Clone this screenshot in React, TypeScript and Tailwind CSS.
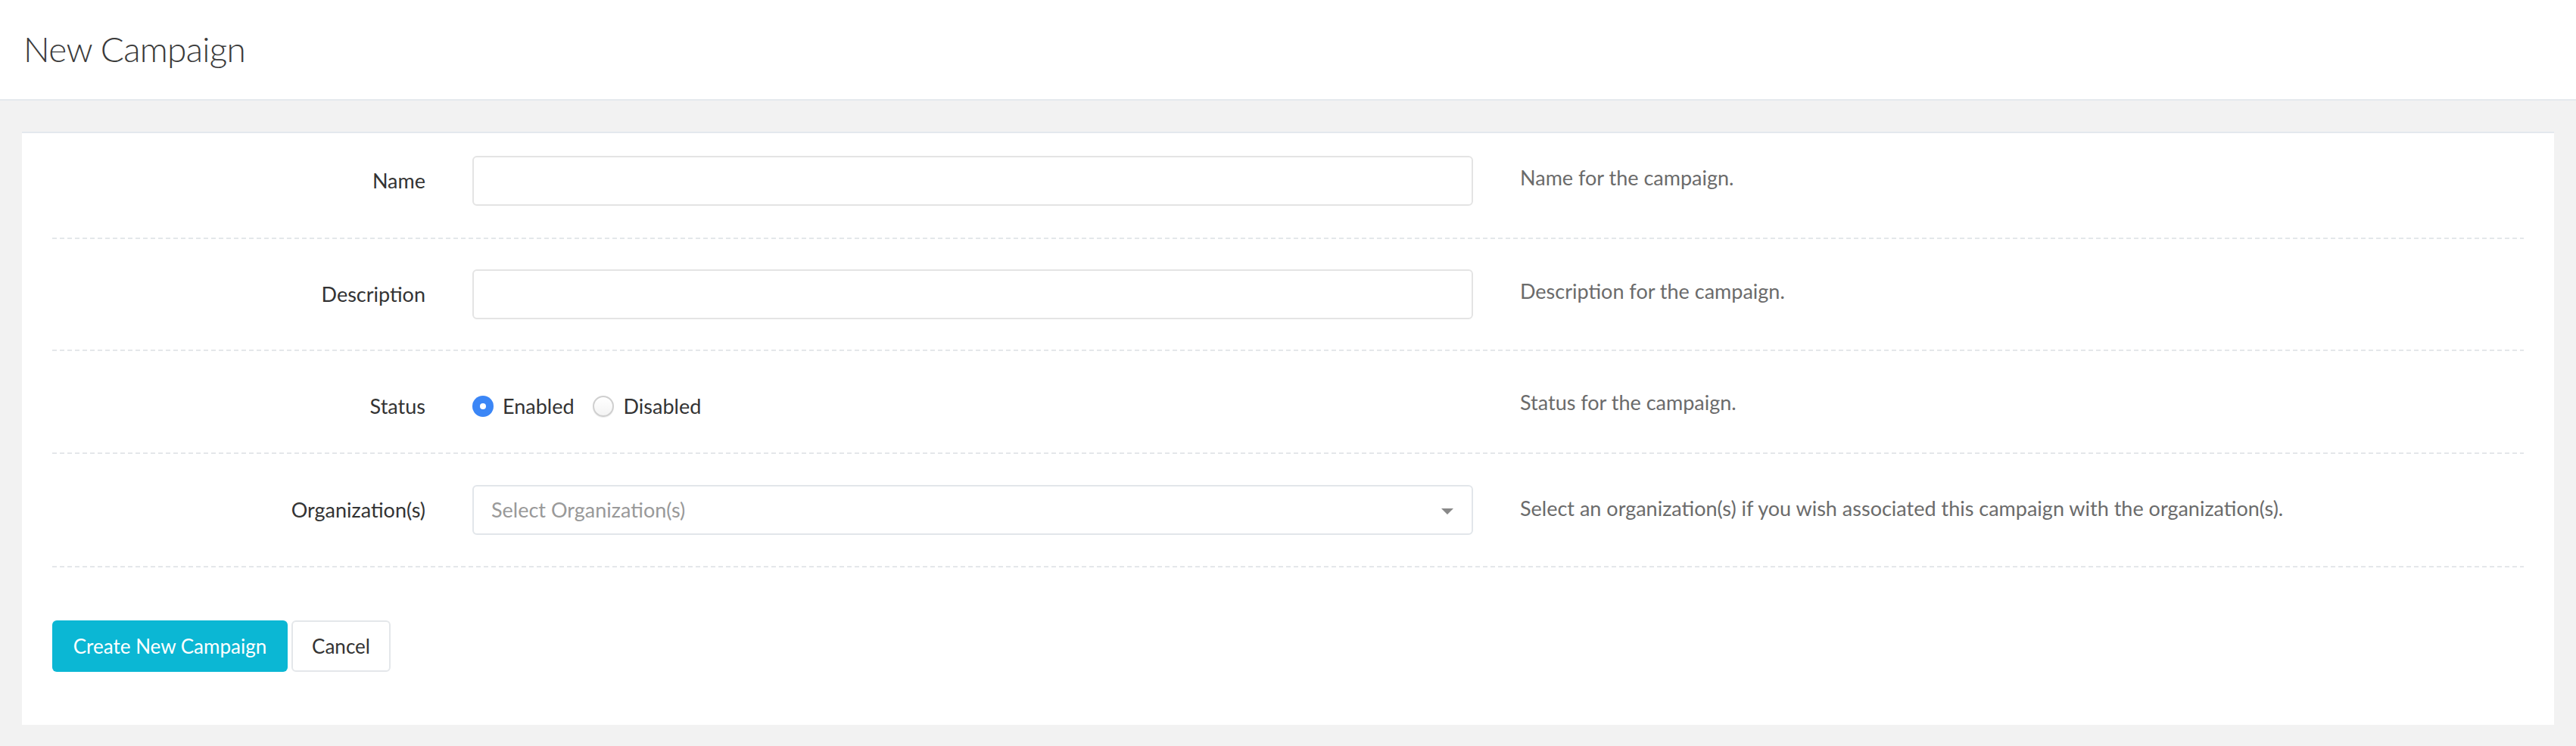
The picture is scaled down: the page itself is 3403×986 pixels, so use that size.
import React from "react";

const Dash = () => (
  <div className="h-[2px] w-full bg-[repeating-linear-gradient(to_right,#e4e7ea_0px,#e4e7ea_6px,transparent_6px,transparent_10px)]" />
);

function Row({
  label,
  help,
  children,
  pad,
  helpOffset = "",
}: {
  label: string;
  help: string;
  children: React.ReactNode;
  pad: string;
  helpOffset?: string;
}) {
  return (
    <div className={`grid grid-cols-[493px_1322px_1fr] gap-x-[62px] ${pad}`}>
      <div className="flex h-[66px] items-center justify-end text-[27px] text-[#333333]">
        {label}
      </div>
      <div className="flex h-[66px] items-center">{children}</div>
      <div className={`flex h-[66px] items-center text-[27px] text-[#6b6b6b] ${helpOffset}`}>
        {help}
      </div>
    </div>
  );
}

export default function App() {
  return (
    <div className="min-h-[986px] bg-[#f2f2f2] font-['Lato','Liberation_Sans',sans-serif]">
      <header className="flex h-[133px] items-center border-b-2 border-[#e5e9ed] bg-white pb-[2px] pl-[31px]">
        <h1 className="text-[46px] font-light tracking-[-0.7px] text-[#3a3a3a] leading-none">New Campaign</h1>
      </header>
      <div className="px-[29px] pt-[41px] pb-[27px]">
        <div className="border-t-2 border-[#e3e8ee] bg-white px-[40px] pb-[70px]">
          <Row label="Name" help="Name for the campaign." pad="pt-[30px] pb-[42px]" helpOffset="-translate-y-[4px]">
            <input className="h-[66px] w-full rounded-[6px] border-2 border-[#e4e4e4] bg-white px-[24px] text-[27px] outline-none" />
          </Row>
          <Dash />
          <Row label="Description" help="Description for the campaign." pad="py-[40px]" helpOffset="-translate-y-[4px]">
            <input className="h-[66px] w-full rounded-[6px] border-2 border-[#e4e4e4] bg-white px-[24px] text-[27px] outline-none" />
          </Row>
          <Dash />
          <Row label="Status" help="Status for the campaign." pad="pt-[40px] pb-[28px]" helpOffset="-translate-y-[5px]">
            <div className="flex items-center text-[27px] text-[#333333]">
              <span className="flex h-[28px] w-[28px] items-center justify-center rounded-full bg-[#3b86f6]">
                <span className="h-[8px] w-[8px] rounded-full bg-white" />
              </span>
              <span className="ml-[12px]">Enabled</span>
              <span className="ml-[24px] h-[28px] w-[28px] rounded-full border-2 border-[#cfcfcf] bg-[linear-gradient(#ffffff,#f3f3f3)] shadow-[0_1px_1px_rgba(0,0,0,0.08)]" />
              <span className="ml-[13px]">Disabled</span>
            </div>
          </Row>
          <Dash />
          <Row label="Organization(s)" help="Select an organization(s) if you wish associated this campaign with the organization(s)." pad="py-[41px]" helpOffset="-translate-y-[2px]">
            <div className="relative flex h-[66px] w-full items-center rounded-[6px] border-2 border-[#e2e6ea] bg-white pl-[23px] text-[27px] text-[#999999]">
              Select Organization(s)
              <svg className="absolute right-[24px] top-[29px]" width="16" height="8" viewBox="0 0 16 8">
                <path d="M0 0H16L8 8Z" fill="#888888" />
              </svg>
            </div>
          </Row>
          <Dash />
          <div className="flex gap-[5px] pt-[70px]">
            <button className="h-[68px] w-[311px] rounded-[6px] bg-[#0bb7d4] text-[26px] text-white">
              Create New Campaign
            </button>
            <button className="h-[68px] w-[131px] rounded-[6px] border-2 border-[#e4e7ea] bg-white text-[26px] text-[#333333]">
              Cancel
            </button>
          </div>
        </div>
      </div>
    </div>
  );
}
